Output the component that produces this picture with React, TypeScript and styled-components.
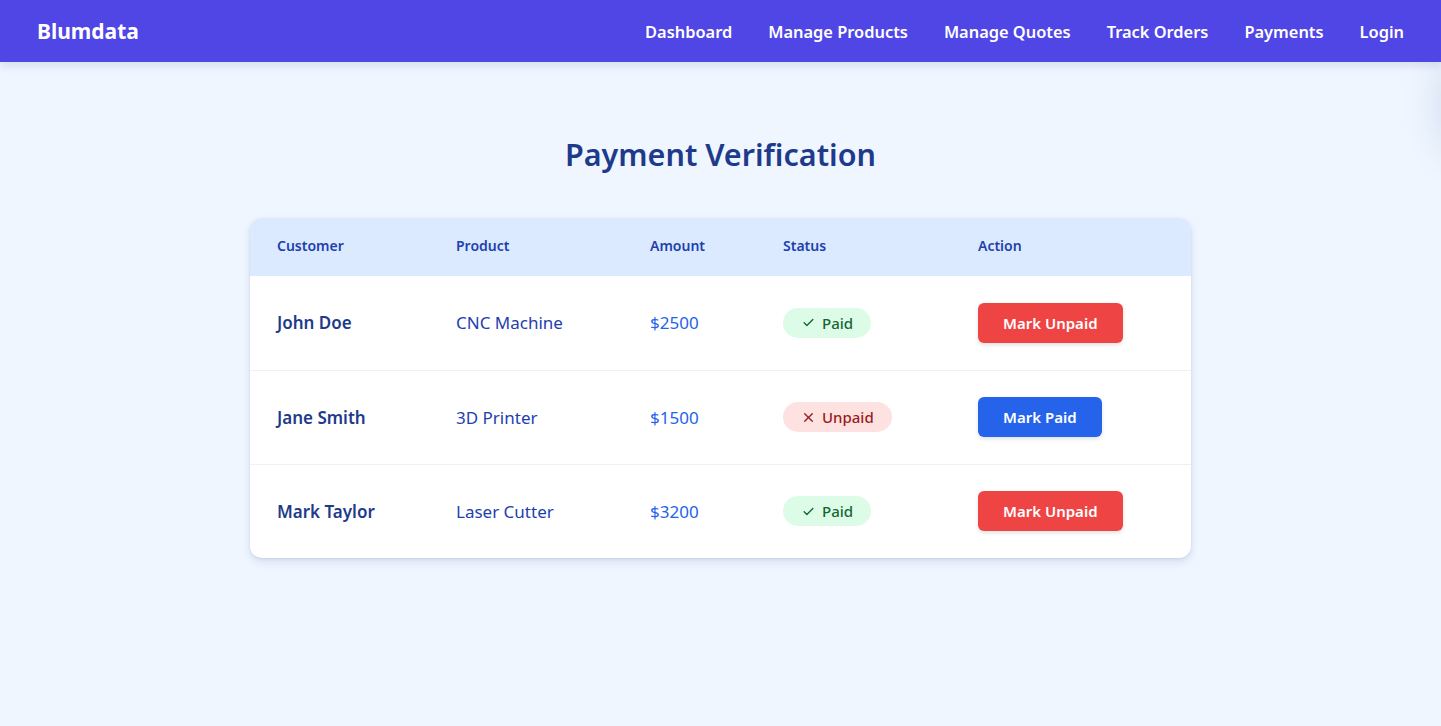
import React from "react";
import styled, { createGlobalStyle } from "styled-components";

const Global = createGlobalStyle`
  html, body { margin: 0; padding: 0; }
  body {
    background: #eff6ff;
    font-family: "Noto Sans", "Open Sans", sans-serif;
    min-height: 726px;
    overflow: hidden;
  }
`;

const Page = styled.div`
  min-height: 726px;
  background: #eff6ff;
  position: relative;
  overflow: hidden;
`;

const Nav = styled.nav`
  height: 62px;
  background: #4f46e5;
  display: flex;
  align-items: center;
  justify-content: space-between;
  padding: 0 37px;
  box-shadow: 0 4px 8px rgba(30, 58, 138, 0.12);
  position: relative;
  z-index: 1;
`;

const Logo = styled.div`
  color: #fff;
  font-weight: 700;
  font-size: 21px;
`;

const Links = styled.div`
  display: flex;
  gap: 36px;
`;

const NavLink = styled.a`
  color: #fff;
  font-weight: 600;
  font-size: 16.4px;
  text-decoration: none;
  cursor: pointer;
`;

const Main = styled.main`
  display: flex;
  flex-direction: column;
  align-items: center;
  padding-top: 71px;
`;

const Title = styled.h1`
  margin: 0 0 43px;
  color: #1e3a8a;
  font-weight: 600;
  font-size: 30.5px;
  line-height: 42px;
`;

const Card = styled.div`
  width: 941px;
  background: #fff;
  border-radius: 12px;
  overflow: hidden;
  box-shadow: 0 4px 8px rgba(30, 58, 138, 0.12), 0 1px 3px rgba(0, 0, 0, 0.08);
`;

const Table = styled.table`
  width: 100%;
  border-collapse: collapse;
  table-layout: fixed;
`;

const HeadRow = styled.tr`
  background: #dbeafe;
  height: 58px;
`;

const Th = styled.th`
  text-align: left;
  color: #1e40af;
  font-weight: 600;
  font-size: 14px;
  padding: 0 0 3px 27px;
`;

const Row = styled.tr<{ $last?: boolean }>`
  height: 94px;
  border-bottom: ${(p) => (p.$last ? "none" : "1px solid #eef0f3")};
`;

const Td = styled.td<{ $tone?: "name" | "product" | "amount" }>`
  padding: 0 0 0 27px;
  font-size: 17px;
  white-space: nowrap;
  color: ${(p) =>
    p.$tone === "name" ? "#1e3a8a" : p.$tone === "amount" ? "#2563eb" : "#1e40af"};
  font-weight: ${(p) => (p.$tone === "name" ? 600 : 400)};
`;

const Badge = styled.span<{ $paid: boolean }>`
  display: inline-flex;
  align-items: center;
  gap: 7px;
  height: 30px;
  padding: 0 18px 0 19px;
  border-radius: 999px;
  font-size: 15px;
  font-weight: 500;
  background: ${(p) => (p.$paid ? "#dcfce7" : "#fee2e2")};
  color: ${(p) => (p.$paid ? "#166534" : "#991b1b")};
  box-sizing: border-box;
`;

const Button = styled.button<{ $variant: "red" | "blue" }>`
  height: 40px;
  padding: 0 25px;
  border: none;
  border-radius: 6px;
  font-family: inherit;
  font-size: 15px;
  font-weight: 600;
  white-space: nowrap;
  color: #fff;
  background: ${(p) => (p.$variant === "red" ? "#ef4444" : "#2563eb")};
  box-shadow: 0 2px 4px rgba(0, 0, 0, 0.12);
  cursor: pointer;
`;

const Glow = styled.div`
  position: absolute;
  right: -100px;
  top: 50px;
  width: 100px;
  height: 110px;
  border-radius: 40px;
  box-shadow: 0 0 40px rgba(30, 58, 138, 0.14);
  pointer-events: none;
`;

const Check = () => (
  <svg width="13" height="13" viewBox="0 0 24 24" fill="none" stroke="currentColor" strokeWidth="2.5" strokeLinecap="round" strokeLinejoin="round">
    <path d="M4 12.5l5 5L20 6.5" />
  </svg>
);

const Cross = () => (
  <svg width="13" height="13" viewBox="0 0 24 24" fill="none" stroke="currentColor" strokeWidth="2.5" strokeLinecap="round">
    <path d="M5 5l14 14M19 5L5 19" />
  </svg>
);

const data = [
  { name: "John Doe", product: "CNC Machine", amount: "$2500", paid: true },
  { name: "Jane Smith", product: "3D Printer", amount: "$1500", paid: false },
  { name: "Mark Taylor", product: "Laser Cutter", amount: "$3200", paid: true },
];

export default function App() {
  return (
    <Page>
      <Global />
      <Nav>
        <Logo>Blumdata</Logo>
        <Links>
          {["Dashboard", "Manage Products", "Manage Quotes", "Track Orders", "Payments", "Login"].map((l) => (
            <NavLink key={l}>{l}</NavLink>
          ))}
        </Links>
      </Nav>
      <Glow />
      <Main>
        <Title>Payment Verification</Title>
        <Card>
          <Table>
            <colgroup>
              <col style={{ width: 179 }} />
              <col style={{ width: 194 }} />
              <col style={{ width: 133 }} />
              <col style={{ width: 195 }} />
              <col />
            </colgroup>
            <thead>
              <HeadRow>
                <Th>Customer</Th>
                <Th>Product</Th>
                <Th>Amount</Th>
                <Th>Status</Th>
                <Th>Action</Th>
              </HeadRow>
            </thead>
            <tbody>
              {data.map((d, i) => (
                <Row key={d.name} $last={i === data.length - 1}>
                  <Td $tone="name">{d.name}</Td>
                  <Td $tone="product">{d.product}</Td>
                  <Td $tone="amount">{d.amount}</Td>
                  <Td>
                    <Badge $paid={d.paid}>
                      {d.paid ? <Check /> : <Cross />}
                      {d.paid ? "Paid" : "Unpaid"}
                    </Badge>
                  </Td>
                  <Td>
                    <Button $variant={d.paid ? "red" : "blue"}>{d.paid ? "Mark Unpaid" : "Mark Paid"}</Button>
                  </Td>
                </Row>
              ))}
            </tbody>
          </Table>
        </Card>
      </Main>
    </Page>
  );
}
